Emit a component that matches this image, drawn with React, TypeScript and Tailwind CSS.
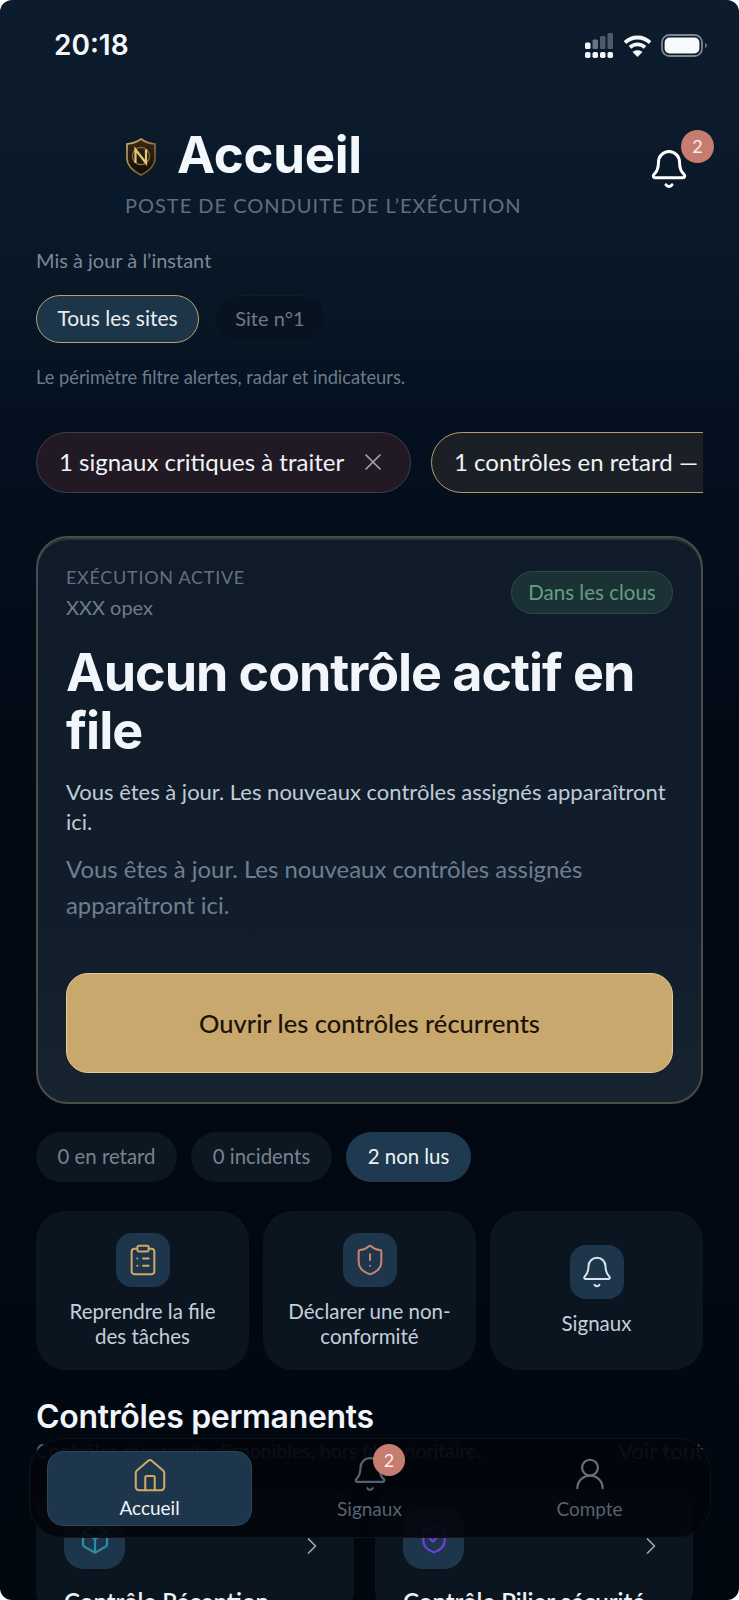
import React from 'react';
import { Bell, Box, ChevronRight, ClipboardList, House, ShieldAlert, ShieldCheck, UserRound, X } from 'lucide-react';

const heading = "font-['Inter',sans-serif]";

const pills = [
  { label: '0 en retard', active: false, width: 'w-[141px]' },
  { label: '0 incidents', active: false, width: 'w-[141px]' },
  { label: '2 non lus', active: true, width: 'w-[125px]' },
];

const actions = [
  { label: ['Reprendre la file', 'des tâches'], icon: ClipboardList, color: 'text-[#d1a865]' },
  { label: ['Déclarer une non-', 'conformité'], icon: ShieldAlert, color: 'text-[#cf8272]' },
  { label: ['Signaux'], icon: Bell, color: 'text-[#dbe4ec]' },
];

const StatusIcons = () => (
  <div className="flex items-center">
    <svg width="28" height="25" viewBox="0 0 28 25">
      <rect x="0" y="9.500" width="5.500" height="6.500" rx="1.500" fill="#f4f7fa" />
      <rect x="7.500" y="6.500" width="5.500" height="9.500" rx="1.500" fill="#6a7682" />
      <rect x="15" y="3" width="5.500" height="13" rx="1.500" fill="#4f5c68" />
      <rect x="22.500" y="0" width="5.500" height="16" rx="1.500" fill="#4f5c68" />
      <rect x="0" y="19" width="5.500" height="6" rx="1.800" fill="#f4f7fa" />
      <rect x="7.500" y="19" width="5.500" height="6" rx="1.800" fill="#f4f7fa" />
      <rect x="15" y="19" width="5.500" height="6" rx="1.800" fill="#f4f7fa" />
      <rect x="22.500" y="19" width="5.500" height="6" rx="1.800" fill="#f4f7fa" />
    </svg>
    <svg className="ml-[10px]" width="29" height="23" viewBox="0 0 29 23" fill="none" stroke="#f4f7fa" strokeWidth="3.800">
      <path d="M2 8.600C8.800 1.800 20.200 1.800 27 8.600" />
      <path d="M7 13.400C11.200 9.400 17.800 9.400 22 13.400" />
      <path d="M14.500 23l-5-5c2.800-2.400 7.200-2.400 10 0z" fill="#f4f7fa" stroke="none" />
    </svg>
    <svg className="ml-[9px]" width="48" height="23" viewBox="0 0 48 23" fill="none">
      <rect x="1" y="1" width="40" height="21" rx="7.500" stroke="#7c8792" strokeWidth="1.800" />
      <rect x="3.600" y="3.600" width="34.800" height="15.800" rx="5" fill="#f7f9fb" />
      <path d="M44 8.500l2.500 3-2.500 3z" fill="#65717c" />
    </svg>
  </div>
);

const Logo = () => (
  <svg className="mt-[4px]" width="32" height="38" viewBox="0 0 32 38" fill="none">
    <defs>
      <linearGradient id="rim" x1="0" y1="0" x2="1" y2="1">
        <stop offset="0" stopColor="#d9b46c" />
        <stop offset="1" stopColor="#5f4519" />
      </linearGradient>
      <linearGradient id="plate" x1="0" y1="0" x2="0" y2="1">
        <stop offset="0" stopColor="#3b2c14" />
        <stop offset="1" stopColor="#0d0a07" />
      </linearGradient>
    </defs>
    <path d="M16 1c4 3 9 4.500 14 5v14c0 8-6 13-14 17C8 33 2 28 2 20V6c5-.5 10-2 14-5z" fill="url(#plate)" stroke="url(#rim)" strokeWidth="1.600" />
    <circle cx="16" cy="18" r="8.600" stroke="#8d6c30" strokeWidth="1.300" />
    <path d="M10.500 25V11.500L21 25V11.500" stroke="#e5c680" strokeWidth="2.200" />
  </svg>
);

export default function App() {
  return (
    <div className="h-[1600px] w-[739px] overflow-hidden bg-white font-['Lato',sans-serif]">
      <div className="relative h-full overflow-hidden rounded-[12px] bg-[linear-gradient(180deg,#0c1c2c_0%,#0a1929_14%,#041020_27%,#020a16_45%,#01070f_100%)]">
        {/* Status bar */}
        <div className="flex h-[90px] items-center justify-between pl-[54px] pr-[30px]">
          <span className="font-['Inter',sans-serif] text-[28px] font-semibold leading-none text-[#f5f7fa]">20:18</span>
          <StatusIcons />
        </div>

        {/* Header */}
        <header className="relative h-[133px] px-[125px] pt-[30px]">
          <div className="flex items-center">
            <Logo />
            <h1 className={`${heading} ml-[20px] text-[51px] font-bold leading-[70px] tracking-[-0.005em] text-[#f4f7fb]`}>Accueil</h1>
          </div>
          <p className="mt-[2px] whitespace-nowrap text-[20px] leading-[26px] tracking-[0.05em] text-[#5d6f81]">POSTE DE CONDUITE DE L’EXÉCUTION</p>
          <Bell className="absolute left-[648px] top-[58px] h-[42px] w-[42px] text-white" strokeWidth={1.700} />
          <span className="absolute left-[681px] top-[40px] flex h-[33px] w-[33px] items-center justify-center rounded-full bg-[#c67c6e] text-[18px] text-[#fbeeea]">2</span>
        </header>

        <div className="px-[36px]">
          <p className="mt-[24px] text-[20px] leading-[26px] text-[#7a8998]">Mis à jour à l’instant</p>

          <div className="mt-[22px] flex gap-[14px]">
            <span className="flex h-[48px] w-[163px] items-center justify-center rounded-full border border-[#b9a36b] bg-[#1d3549] pb-[2px] text-[21px] text-[#e8edf2]">Tous les sites</span>
            <span className="flex h-[48px] w-[114px] items-center justify-center rounded-full border border-[#101c28] bg-[#071320] pb-[2px] text-[20px] text-[#6b7a89]">Site n°1</span>
          </div>

          <p className="mt-[22px] text-[18.300px] leading-[24px] text-[#6c7b8a]">Le périmètre filtre alertes, radar et indicateurs.</p>

          {/* Alert strip */}
          <div className="mt-[43px] flex gap-[20px] overflow-hidden">
            <div className="flex h-[61px] w-[375px] shrink-0 items-center rounded-full border border-[#443c44] bg-[#211a24] pb-[2px] pl-[22px] text-[24px] text-[#f0f3f6]">
              <span>1 signaux critiques à traiter</span>
              <X className="ml-[15px] h-[28px] w-[28px] text-[#9aa5b0]" strokeWidth={1.500} />
            </div>
            <div className="flex h-[61px] w-[340px] shrink-0 items-center whitespace-nowrap rounded-full border border-[#b49c68] bg-[#1b2026] pb-[2px] pl-[22px] text-[24px] text-[#f0f3f6]">1 contrôles en retard — 2 à venir</div>
          </div>

          {/* Active card */}
          <section className="mt-[43px] h-[568px] rounded-[32px] border-2 border-[#4a4c48] bg-[linear-gradient(180deg,#101b29_0%,#121d2b_70%,#182330_100%)] px-[28px] pt-[27px] shadow-[inset_0_2px_0_#2a333b]">
            <div className="flex items-start justify-between">
              <div>
                <p className="text-[18px] leading-[24px] tracking-[0.04em] text-[#607081]">EXÉCUTION ACTIVE</p>
                <p className="mt-[6px] text-[20px] leading-[24px] text-[#6d7d8d]">XXX opex</p>
              </div>
              <span className="mt-[6px] flex h-[43px] w-[162px] items-center justify-center rounded-full border border-[#2c4a48] bg-[#1a3236] text-[20.500px] text-[#659e81]">Dans les clous</span>
            </div>
            <h2 className={`${heading} mt-[25px] text-[52px] font-bold leading-[58px] tracking-[-0.02em] text-[#f2f5fa]`}>Aucun contrôle actif en file</h2>
            <p className="mt-[17px] text-[22px] leading-[30px] text-[#bfcbd7]">Vous êtes à jour. Les nouveaux contrôles assignés apparaîtront ici.</p>
            <p className="mt-[14px] text-[23.900px] leading-[36px] text-[#6c7f91]">Vous êtes à jour. Les nouveaux contrôles assignés apparaîtront ici.</p>
            <button className="mt-[50px] flex h-[100px] w-full items-center justify-center rounded-[22px] border border-[#e4cb94] bg-[#c8a86c] text-[25.500px] font-medium text-[#1d1207]">Ouvrir les contrôles récurrents</button>
          </section>

          {/* Counters */}
          <div className="mt-[28px] flex gap-[14px]">
            {pills.map((pill) => (
              <span
                key={pill.label}
                className={`flex h-[50px] items-center justify-center rounded-full pb-[1px] text-[20.400px] ${pill.width} ${pill.active ? 'bg-[#1f3a50] text-[#eef2f6]' : 'bg-[#0c1722] text-[#76838f]'}`}
              >
                {pill.label}
              </span>
            ))}
          </div>

          {/* Quick actions */}
          <div className="mt-[29px] grid grid-cols-3 gap-[14px]">
            {actions.map((action) => (
              <div key={action.label[0]} className="flex h-[159px] flex-col items-center justify-center rounded-[30px] bg-[#0b1520]">
                <span className="flex h-[54px] w-[54px] items-center justify-center rounded-[16px] bg-[#1e364b]">
                  <action.icon className={`h-[34px] w-[34px] ${action.color}`} strokeWidth={1.400} />
                </span>
                <div className="mt-[12px] text-center text-[20.500px] leading-[25px] text-[#c3cfda]">
                  {action.label.map((line) => (
                    <div key={line}>{line}</div>
                  ))}
                </div>
              </div>
            ))}
          </div>

          {/* Permanent controls */}
          <h3 className={`${heading} mt-[29px] text-[32px] font-semibold leading-[36px] tracking-[-0.01em] text-[#f2f5fa]`}>Contrôles permanents</h3>
          <div className="mt-[3px] flex items-center justify-between">
            <p className="text-[19.400px] leading-[26px] text-[#5d6c7b]">Contrôles récurrents disponibles, hors file prioritaire.</p>
            <span className="text-[22px] leading-[26px] text-[#5d6c7b]">Voir tout</span>
          </div>
          <div className="mt-[24px] flex gap-[21px]">
            {[
              { title: 'Contrôle Réception', icon: Box, color: 'text-[#2b8da3]' },
              { title: 'Contrôle Pilier sécurité', icon: ShieldCheck, color: 'text-[#6d3fd6]' },
            ].map((card) => (
              <div key={card.title} className="h-[130px] w-[318px] shrink-0 rounded-[28px] bg-[#0b1520] px-[28px] pt-[20px]">
                <div className="flex items-start justify-between">
                  <span className="flex h-[61px] w-[61px] items-center justify-center rounded-[20px] bg-[#1e364b]">
                    <card.icon className={`h-[32px] w-[32px] ${card.color}`} strokeWidth={1.700} />
                  </span>
                  <ChevronRight className="mt-[24px] h-[28px] w-[28px] text-[#9aa6b2]" strokeWidth={1.500} />
                </div>
                <p className="mt-[15px] whitespace-nowrap text-[24px] font-semibold text-[#eef2f6]">{card.title}</p>
              </div>
            ))}
          </div>
        </div>

        {/* Bottom nav */}
        <nav className="absolute left-[29px] top-[1438px] flex h-[100px] w-[682px] items-center rounded-[34px] border border-[#0d141c] bg-[#03060c]/90 px-[17px]">
          <div className="flex h-[75px] w-[205px] flex-col items-center justify-center rounded-[16px] border border-[#2b475d] bg-[#1e364b]">
            <House className="h-[38px] w-[38px] text-[#d1a865]" strokeWidth={1.300} />
            <span className="mt-[1px] text-[19px] leading-[24px] text-[#eef2f6]">Accueil</span>
          </div>
          <div className="relative flex w-[235px] flex-col items-center">
            <Bell className="h-[38px] w-[38px] text-[#56626e]" strokeWidth={1.400} />
            <span className="mt-[4px] text-[19px] leading-[24px] text-[#56626e]">Signaux</span>
            <span className="absolute left-[121px] top-[-11px] flex h-[32px] w-[32px] items-center justify-center rounded-full bg-[#c67c6e] text-[18px] text-[#fbeeea]">2</span>
          </div>
          <div className="flex w-[205px] flex-col items-center">
            <UserRound className="h-[38px] w-[38px] text-[#64707b]" strokeWidth={1.400} />
            <span className="mt-[4px] text-[19px] leading-[24px] text-[#56626e]">Compte</span>
          </div>
        </nav>
      </div>
    </div>
  );
}
